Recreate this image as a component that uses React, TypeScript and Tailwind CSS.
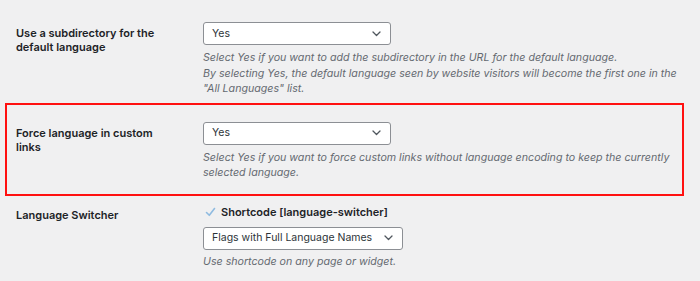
import React from "react";

function Chevron() {
  return (
    <svg width="9" height="6" viewBox="0 0 9 6" fill="none" className="shrink-0">
      <path d="M1 1l3.5 3.5L8 1" stroke="#50575e" strokeWidth="1.3" strokeLinecap="round" strokeLinejoin="round" />
    </svg>
  );
}

function Select({ value, width }: { value: string; width: string }) {
  return (
    <div
      className={`${width} h-[23px] flex items-center justify-between pl-[8px] pr-[9px] bg-white border border-[#8c8f94] rounded-[3px] text-[10.5px] text-[#2c3338] whitespace-nowrap`}
    >
      <span>{value}</span>
      <Chevron />
    </div>
  );
}

export default function App() {
  const font = { fontFamily: "Inter, 'Noto Sans', sans-serif" } as React.CSSProperties;
  return (
    <div className="w-[700px] h-[281px] bg-[#f0f0f1] overflow-hidden text-[#1d2327]" style={font}>
      {/* Row 1 */}
      <div className="flex pl-[16px] pt-[22px]">
        <div className="w-[187px] pt-[4px] text-[11px] leading-[14px] font-semibold">
          Use a subdirectory for the
          <br />
          default language
        </div>
        <div className="flex flex-col">
          <Select value="Yes" width="w-[188px]" />
          <div className="mt-[5px] text-[10.65px] leading-[15.5px] italic text-[#646970] whitespace-nowrap">
            <div>Select Yes if you want to add the subdirectory in the URL for the default language.</div>
            <div>By selecting Yes, the default language seen by website visitors will become the first one in the</div>
            <div>"All Languages" list.</div>
          </div>
        </div>
      </div>

      {/* Highlighted row */}
      <div className="mt-[6px] ml-[5px] w-[679px] h-[93px] border-2 border-[#ff1010] flex pl-[9px] pt-[17px]">
        <div className="w-[187px] pt-[4px] text-[11px] leading-[14px] font-semibold">
          Force language in custom
          <br />
          links
        </div>
        <div className="flex flex-col">
          <Select value="Yes" width="w-[188px]" />
          <div className="mt-[5px] text-[10.65px] leading-[15.5px] italic text-[#646970] whitespace-nowrap">
            <div>Select Yes if you want to force custom links without language encoding to keep the currently</div>
            <div>selected language.</div>
          </div>
        </div>
      </div>

      {/* Language switcher row */}
      <div className="flex pl-[16px] pt-[9px]">
        <div className="w-[187px] pt-[3px] text-[11px] leading-[14px] font-semibold">Language Switcher</div>
        <div className="flex flex-col">
          <div className="flex items-center h-[14px]">
            <svg width="11" height="10" viewBox="0 0 11 10" className="ml-[2px] mr-[5px]">
              <path d="M1.5 5.5l2.8 2.8L9.5 1.5" stroke="#8fbbe0" strokeWidth="1.6" fill="none" strokeLinecap="round" strokeLinejoin="round" />
            </svg>
            <span className="text-[11px] leading-[14px] font-semibold">Shortcode [language-switcher]</span>
          </div>
          <div className="mt-[8px]">
            <Select value="Flags with Full Language Names" width="w-[200px]" />
          </div>
          <div className="mt-[4px] text-[10.65px] leading-[15.5px] italic text-[#646970] whitespace-nowrap">
            Use shortcode on any page or widget.
          </div>
        </div>
      </div>
    </div>
  );
}
